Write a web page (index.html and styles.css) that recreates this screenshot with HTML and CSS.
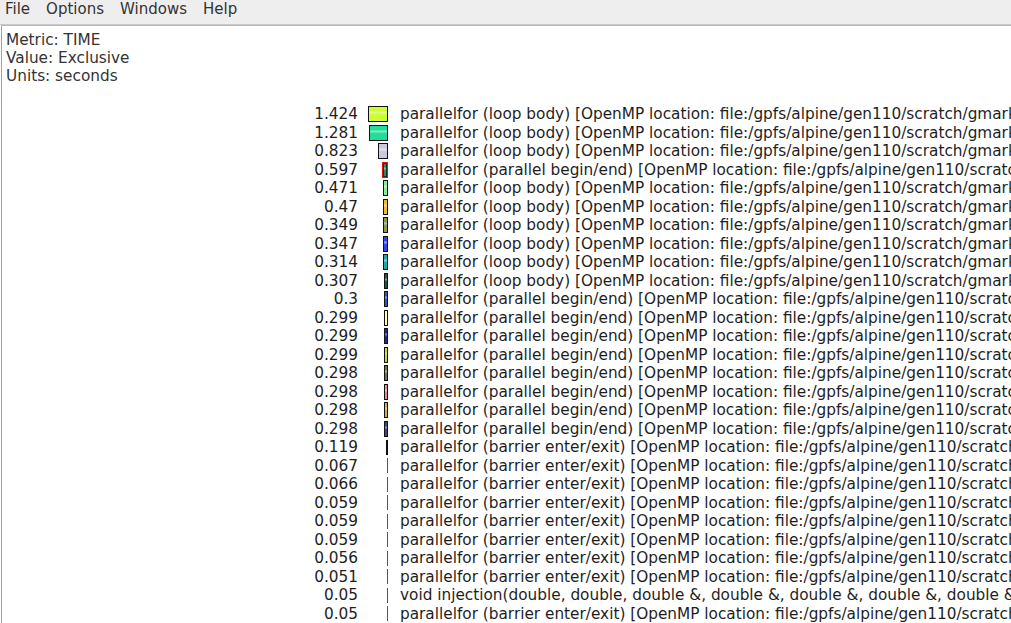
FILE: index.html
```html
<!DOCTYPE html>
<html>
<head>
<meta charset="utf-8">
<link rel="stylesheet" href="styles.css">
</head>
<body>
<div class="menubar">
  <span class="menu">File</span>
  <span class="menu">Options</span>
  <span class="menu">Windows</span>
  <span class="menu">Help</span>
</div>
<div class="panel">
  <div class="info">
    <div>Metric: TIME</div>
    <div>Value: Exclusive</div>
    <div>Units: seconds</div>
  </div>
  <div class="list">
    <div class="row"><span class="num">1.424</span><span class="barcell"><span class="bar" style="width:18px;background-color:#ccff33"></span></span><span class="txt">parallelfor (loop body) [OpenMP location: file:/gpfs/alpine/gen110/scratch/gmark/src/kernels.cpp]</span></div>
    <div class="row"><span class="num">1.281</span><span class="barcell"><span class="bar" style="width:17px;background-color:#22dd99"></span></span><span class="txt">parallelfor (loop body) [OpenMP location: file:/gpfs/alpine/gen110/scratch/gmark/src/kernels.cpp]</span></div>
    <div class="row"><span class="num">0.823</span><span class="barcell"><span class="bar" style="width:8px;background-color:#ccc8dd"></span></span><span class="txt">parallelfor (loop body) [OpenMP location: file:/gpfs/alpine/gen110/scratch/gmark/src/kernels.cpp]</span></div>
    <div class="row"><span class="num">0.597</span><span class="barcell"><span class="bar red" style="width:4px;background-color:#228866"></span></span><span class="txt">parallelfor (parallel begin/end) [OpenMP location: file:/gpfs/alpine/gen110/scratch/gmark/src/kernels.cpp]</span></div>
    <div class="row"><span class="num">0.471</span><span class="barcell"><span class="bar" style="width:3px;background-color:#88ee99"></span></span><span class="txt">parallelfor (loop body) [OpenMP location: file:/gpfs/alpine/gen110/scratch/gmark/src/kernels.cpp]</span></div>
    <div class="row"><span class="num">0.47</span><span class="barcell"><span class="bar" style="width:3px;background-color:#eebb33"></span></span><span class="txt">parallelfor (loop body) [OpenMP location: file:/gpfs/alpine/gen110/scratch/gmark/src/kernels.cpp]</span></div>
    <div class="row"><span class="num">0.349</span><span class="barcell"><span class="bar" style="width:3px;background-color:#889955"></span></span><span class="txt">parallelfor (loop body) [OpenMP location: file:/gpfs/alpine/gen110/scratch/gmark/src/kernels.cpp]</span></div>
    <div class="row"><span class="num">0.347</span><span class="barcell"><span class="bar" style="width:3px;background-color:#3344ee"></span></span><span class="txt">parallelfor (loop body) [OpenMP location: file:/gpfs/alpine/gen110/scratch/gmark/src/kernels.cpp]</span></div>
    <div class="row"><span class="num">0.314</span><span class="barcell"><span class="bar" style="width:3px;background-color:#22aaaa"></span></span><span class="txt">parallelfor (loop body) [OpenMP location: file:/gpfs/alpine/gen110/scratch/gmark/src/kernels.cpp]</span></div>
    <div class="row"><span class="num">0.307</span><span class="barcell"><span class="bar" style="width:2px;background-color:#225544"></span></span><span class="txt">parallelfor (loop body) [OpenMP location: file:/gpfs/alpine/gen110/scratch/gmark/src/kernels.cpp]</span></div>
    <div class="row"><span class="num">0.3</span><span class="barcell"><span class="bar" style="width:2px;background-color:#3355cc"></span></span><span class="txt">parallelfor (parallel begin/end) [OpenMP location: file:/gpfs/alpine/gen110/scratch/gmark/src/kernels.cpp]</span></div>
    <div class="row"><span class="num">0.299</span><span class="barcell"><span class="bar" style="width:2px;background-color:#ffffaa"></span></span><span class="txt">parallelfor (parallel begin/end) [OpenMP location: file:/gpfs/alpine/gen110/scratch/gmark/src/kernels.cpp]</span></div>
    <div class="row"><span class="num">0.299</span><span class="barcell"><span class="bar" style="width:2px;background-color:#2222aa"></span></span><span class="txt">parallelfor (parallel begin/end) [OpenMP location: file:/gpfs/alpine/gen110/scratch/gmark/src/kernels.cpp]</span></div>
    <div class="row"><span class="num">0.299</span><span class="barcell"><span class="bar" style="width:2px;background-color:#bbdd33"></span></span><span class="txt">parallelfor (parallel begin/end) [OpenMP location: file:/gpfs/alpine/gen110/scratch/gmark/src/kernels.cpp]</span></div>
    <div class="row"><span class="num">0.298</span><span class="barcell"><span class="bar" style="width:2px;background-color:#777755"></span></span><span class="txt">parallelfor (parallel begin/end) [OpenMP location: file:/gpfs/alpine/gen110/scratch/gmark/src/kernels.cpp]</span></div>
    <div class="row"><span class="num">0.298</span><span class="barcell"><span class="bar" style="width:2px;background-color:#ee8888"></span></span><span class="txt">parallelfor (parallel begin/end) [OpenMP location: file:/gpfs/alpine/gen110/scratch/gmark/src/kernels.cpp]</span></div>
    <div class="row"><span class="num">0.298</span><span class="barcell"><span class="bar" style="width:2px;background-color:#ddaa44"></span></span><span class="txt">parallelfor (parallel begin/end) [OpenMP location: file:/gpfs/alpine/gen110/scratch/gmark/src/kernels.cpp]</span></div>
    <div class="row"><span class="num">0.298</span><span class="barcell"><span class="bar" style="width:2px;background-color:#444488"></span></span><span class="txt">parallelfor (parallel begin/end) [OpenMP location: file:/gpfs/alpine/gen110/scratch/gmark/src/kernels.cpp]</span></div>
    <div class="row"><span class="num">0.119</span><span class="barcell"><span class="thick"></span></span><span class="txt">parallelfor (barrier enter/exit) [OpenMP location: file:/gpfs/alpine/gen110/scratch/gmark/src/kernels.cpp]</span></div>
    <div class="row"><span class="num">0.067</span><span class="barcell"><span class="line"></span></span><span class="txt">parallelfor (barrier enter/exit) [OpenMP location: file:/gpfs/alpine/gen110/scratch/gmark/src/kernels.cpp]</span></div>
    <div class="row"><span class="num">0.066</span><span class="barcell"><span class="line"></span></span><span class="txt">parallelfor (barrier enter/exit) [OpenMP location: file:/gpfs/alpine/gen110/scratch/gmark/src/kernels.cpp]</span></div>
    <div class="row"><span class="num">0.059</span><span class="barcell"><span class="line"></span></span><span class="txt">parallelfor (barrier enter/exit) [OpenMP location: file:/gpfs/alpine/gen110/scratch/gmark/src/kernels.cpp]</span></div>
    <div class="row"><span class="num">0.059</span><span class="barcell"><span class="line"></span></span><span class="txt">parallelfor (barrier enter/exit) [OpenMP location: file:/gpfs/alpine/gen110/scratch/gmark/src/kernels.cpp]</span></div>
    <div class="row"><span class="num">0.059</span><span class="barcell"><span class="line"></span></span><span class="txt">parallelfor (barrier enter/exit) [OpenMP location: file:/gpfs/alpine/gen110/scratch/gmark/src/kernels.cpp]</span></div>
    <div class="row"><span class="num">0.056</span><span class="barcell"><span class="line"></span></span><span class="txt">parallelfor (barrier enter/exit) [OpenMP location: file:/gpfs/alpine/gen110/scratch/gmark/src/kernels.cpp]</span></div>
    <div class="row"><span class="num">0.051</span><span class="barcell"><span class="line"></span></span><span class="txt">parallelfor (barrier enter/exit) [OpenMP location: file:/gpfs/alpine/gen110/scratch/gmark/src/kernels.cpp]</span></div>
    <div class="row"><span class="num">0.05</span><span class="barcell"><span class="line"></span></span><span class="txt">void injection(double, double, double &amp;, double &amp;, double &amp;, double &amp;, double &amp;, double &amp;)</span></div>
    <div class="row"><span class="num">0.05</span><span class="barcell"><span class="line"></span></span><span class="txt">parallelfor (barrier enter/exit) [OpenMP location: file:/gpfs/alpine/gen110/scratch/gmark/src/kernels.cpp]</span></div>
  </div>
</div>
</body>
</html>
```

FILE: styles.css
```css
html, body {
  margin: 0;
  padding: 0;
  width: 1011px;
  height: 623px;
  overflow: hidden;
  background: #ffffff;
  font-family: "DejaVu Sans", sans-serif;
  color: #1e1e1e;
}

.menubar {
  height: 25px;
  box-sizing: border-box;
  background: #eeeeee;
  border-bottom: 1px solid #c8c8c8;
  display: flex;
  align-items: flex-start;
  padding: 0 0 0 5px;
  gap: 16px;
  font-size: 15px;
  line-height: 18px;
  color: #333333;
}

.panel {
  height: 598px;
  border-left: 1px solid #a0a0a0;
  margin-left: 1px;
  border-top: 1px solid #b8b8b8;
  overflow: hidden;
  font-size: 15.3px;
}

.info {
  padding: 5px 0 0 4px;
  line-height: 18px;
  color: #333333;
}

.list {
  margin-top: 20px;
}

.row {
  display: flex;
  align-items: center;
  height: 18.5px;
  white-space: nowrap;
}

.num {
  width: 356px;
  text-align: right;
  flex: none;
}

.barcell {
  width: 30px;
  flex: none;
  display: flex;
  justify-content: flex-end;
  align-items: center;
  height: 100%;
}

.bar {
  height: 14px;
  border: 1px solid #111111;
  box-sizing: content-box;
  background-image: linear-gradient(to bottom, rgba(255,255,255,0) 0%, rgba(255,255,255,0) 25%, rgba(255,255,255,0.45) 38%, rgba(255,255,255,0) 55%);
}

.bar.red {
  border-color: #ee1111;
  box-shadow: inset 0 0 0 1px #113322;
}

.thick {
  width: 2px;
  height: 15px;
  background: #111111;
}

.line {
  width: 1px;
  height: 15px;
  background: #555555;
}

.txt {
  padding-left: 12px;
  flex: none;
}
```
